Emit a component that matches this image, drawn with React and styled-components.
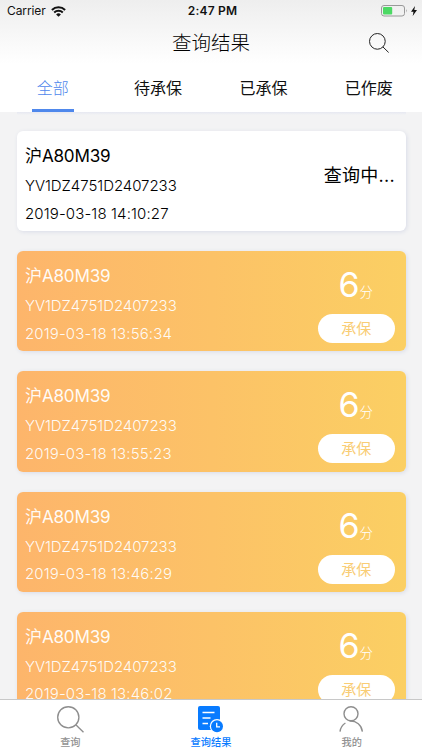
import React from 'react';
import styled, { createGlobalStyle } from 'styled-components';

const GlobalStyle = createGlobalStyle`
    * {
        box-sizing: border-box;
    }

    body {
        margin: 0;
        overflow: hidden;
        font-family: Inter, "Noto Sans CJK SC", sans-serif;
    }
`;

const Screen = styled.div`
    display: flex;
    flex-direction: column;
    width: 422px;
    height: 750px;
    overflow: hidden;
    background: #f3f3f4;
`;

// Status bar and title share one fading background
const Header = styled.header`
    height: 64px;
    flex-shrink: 0;
    background: linear-gradient(#eeeeee, #ffffff);
`;

const StatusBar = styled.div`
    display: grid;
    grid-template-columns: 1fr auto 1fr;
    align-items: center;
    height: 22px;
    padding: 0 5px 0 7px;
    font-size: 12px;
    line-height: 22px;
    color: #111;
`;

const Carrier = styled.div`
    display: flex;
    align-items: center;
    gap: 5px;
    letter-spacing: -0.1px;
`;

const Clock = styled.div`
    padding-left: 1px;
    font-weight: 600;
    letter-spacing: 0.2px;
`;

const Power = styled.div`
    display: flex;
    align-items: center;
    justify-content: flex-end;
    gap: 3px;
`;

const TitleBar = styled.div`
    display: grid;
    grid-template-columns: 1fr auto 1fr;
    align-items: center;
    height: 42px;
    padding-right: 33px;
    padding-left: 33px;
`;

const Title = styled.h1`
    grid-column: 2;
    margin: 0;
    font-size: 19.5px;
    font-weight: 300;
    line-height: 40px;
    color: #000;
`;

const SearchButton = styled.button`
    justify-self: end;
    display: flex;
    padding: 0;
    border: none;
    background: none;
`;

const Tabs = styled.nav`
    display: grid;
    grid-template-columns: repeat(4, 105.4px);
    flex-shrink: 0;
    height: 48px;
    background: white;
`;

const Tab = styled.div`
    justify-self: center;
    width: ${props => (props.$active ? '42px' : 'auto')};
    height: 48px;
    border-bottom: 3px solid ${props => (props.$active ? '#4f88ec' : 'transparent')};
    font-size: 16px;
    font-weight: ${props => (props.$active ? 300 : 400)};
    line-height: 48px;
    text-align: center;
    color: ${props => (props.$active ? '#4f88ec' : '#111')};
`;

const List = styled.main`
    display: flex;
    flex-direction: column;
    flex: 1;
    gap: 20px;
    min-height: 0;
    padding: 19px 16.5px 0;
    overflow: hidden;
    background: linear-gradient(#e6e8f1, #f3f3f4) 17px 0 / 389px 3px no-repeat;
`;

const Card = styled.article`
    display: flex;
    justify-content: space-between;
    flex-shrink: 0;
    height: 100.2px;
    padding: 10px 10.5px 0 8.5px;
    border-radius: 6px;
    box-shadow: 1px 1px 4px #d9dce8;
    color: ${props => (props.$pending ? '#000' : 'rgba(255, 255, 255, 0.95)')};
    background: ${props => (props.$pending ? 'white' : 'linear-gradient(90deg, #fdb56b, #fbcf63)')};
`;

const Plate = styled.div`
    margin-top: -1px;
    font-size: 17.1px;
    line-height: 31px;
    letter-spacing: -0.2px;
`;

const Detail = styled.div`
    margin-top: ${props => (props.$first ? '1px' : 0)};
    font-size: 15px;
    font-weight: 300;
    line-height: 27.5px;
    letter-spacing: ${props => (props.$first ? '-0.05px' : '0.13px')};
`;

const Pending = styled.div`
    padding-top: 19px;
    font-size: 18px;
    line-height: 31px;
    letter-spacing: 0.3px;
`;

const Result = styled.div`
    display: flex;
    flex-direction: column;
    align-items: center;
    width: 77.5px;
`;

const Score = styled.div`
    height: 53px;
    padding-right: 1px;
    font-size: 34px;
    line-height: 47px;
    color: white;
`;

const Unit = styled.span`
    font-size: 13.5px;
    font-weight: 300;
`;

const InsureButton = styled.button`
    width: 77.5px;
    height: 29px;
    padding: 0;
    border: none;
    border-radius: 15px;
    font: 400 15px/29px Inter, "Noto Sans CJK SC", sans-serif;
    color: #f9cd75;
    background: white;
`;

const TabBar = styled.footer`
    display: grid;
    grid-template-columns: repeat(3, 1fr);
    flex-shrink: 0;
    height: 51px;
    border-top: 1px solid #c8c8c8;
    background: white;
`;

const TabBarItem = styled.div`
    display: flex;
    flex-direction: column;
    align-items: center;
    padding-top: 6px;
    font-size: 10.2px;
    font-weight: 500;
    line-height: 15px;
    color: ${props => (props.$active ? '#087bff' : '#929292')};

    svg {
        margin-bottom: 2px;
    }
`;

const WifiIcon = () => (
    <svg width="15" height="11" viewBox="0 0 15 11" fill="none" stroke="#111" strokeWidth="2">
        <path d="M0.9 4A9.4 9.4 0 0 1 14.1 4M3.2 6.5A6.2 6.2 0 0 1 11.8 6.5" />
        <path d="M7.5 10.8L5.1 8.4A3.6 3.6 0 0 1 9.9 8.4Z" fill="#111" stroke="none" />
    </svg>
);

const BatteryIcon = () => (
    <svg width="27" height="12" viewBox="0 0 27 12">
        <rect x="0.5" y="0.5" width="23" height="10.5" rx="2.5" fill="none" stroke="#999" />
        <rect x="2" y="2" width="9.2" height="7.5" rx="1" fill="#4cd964" />
        <path d="M25 4Q26.5 5.7 25 7.5Z" fill="#999" />
    </svg>
);

const BoltIcon = () => (
    <svg width="6" height="10" viewBox="0 0 6 10">
        <path d="M4 0L0 5.7H2.5L1.7 10L6 4H3.3Z" fill="#111" />
    </svg>
);

const SearchIcon = ({ size, color }) => (
    <svg width={size} height={size} viewBox="0 0 27 27" fill="none" stroke={color} strokeWidth="1.35">
        <circle cx="11.3" cy="11.3" r="10.6" />
        <path d="M18.8 18.8L26.5 26.3" />
    </svg>
);

const ResultIcon = () => (
    <svg width="27" height="27" viewBox="0 0 27 27">
        <rect x="1" y="0" width="22" height="24" rx="2" fill="#087bff" />
        <path d="M5.5 6.5H17.5M5.5 12H13.5M5.5 17.5H11" stroke="white" strokeWidth="1.5" />
        <circle cx="20" cy="20.2" r="7.2" fill="white" />
        <circle cx="20" cy="20.2" r="6" fill="#087bff" />
        <path d="M19.7 16.8V20.8H23" fill="none" stroke="white" strokeWidth="1.3" />
    </svg>
);

const UserIcon = () => (
    <svg width="27" height="27" viewBox="0 0 27 27" fill="none" stroke="#8e8e8e" strokeWidth="1.4">
        <circle cx="13" cy="7.7" r="7" />
        <path d="M2 25.6C2.5 21.7 4.2 19 7.4 17M11.5 15.1C18.5 14.7 23.6 19 24.4 25.6" />
    </svg>
);

const tabs = ['全部', '待承保', '已承保', '已作废'];

const records = [
    { time: '2019-03-18 14:10:27', pending: true },
    { time: '2019-03-18 13:56:34' },
    { time: '2019-03-18 13:55:23' },
    { time: '2019-03-18 13:46:29' },
    { time: '2019-03-18 13:46:02' },
];

const RecordCard = ({ record }) => (
    <Card $pending={record.pending}>
        <div>
            <Plate>沪A80M39</Plate>
            <Detail $first>YV1DZ4751D2407233</Detail>
            <Detail>{record.time}</Detail>
        </div>
        {record.pending ? (
            <Pending>查询中...</Pending>
        ) : (
            <Result>
                <Score>6<Unit>分</Unit></Score>
                <InsureButton>承保</InsureButton>
            </Result>
        )}
    </Card>
);

const App = () => {
    return (
        <Screen>
            <GlobalStyle />
            <Header>
                <StatusBar>
                    <Carrier>Carrier <WifiIcon /></Carrier>
                    <Clock>2:47 PM</Clock>
                    <Power><BatteryIcon /><BoltIcon /></Power>
                </StatusBar>
                <TitleBar>
                    <Title>查询结果</Title>
                    <SearchButton><SearchIcon size={20} color="#222" /></SearchButton>
                </TitleBar>
            </Header>
            <Tabs>
                {tabs.map((tab, index) => (
                    <Tab key={tab} $active={index === 0}>{tab}</Tab>
                ))}
            </Tabs>
            <List>
                {records.map((record) => (
                    <RecordCard key={record.time} record={record} />
                ))}
            </List>
            <TabBar>
                <TabBarItem><SearchIcon size={27} color="#8e8e8e" />查询</TabBarItem>
                <TabBarItem $active><ResultIcon />查询结果</TabBarItem>
                <TabBarItem><UserIcon />我的</TabBarItem>
            </TabBar>
        </Screen>
    );
};

export default App;
